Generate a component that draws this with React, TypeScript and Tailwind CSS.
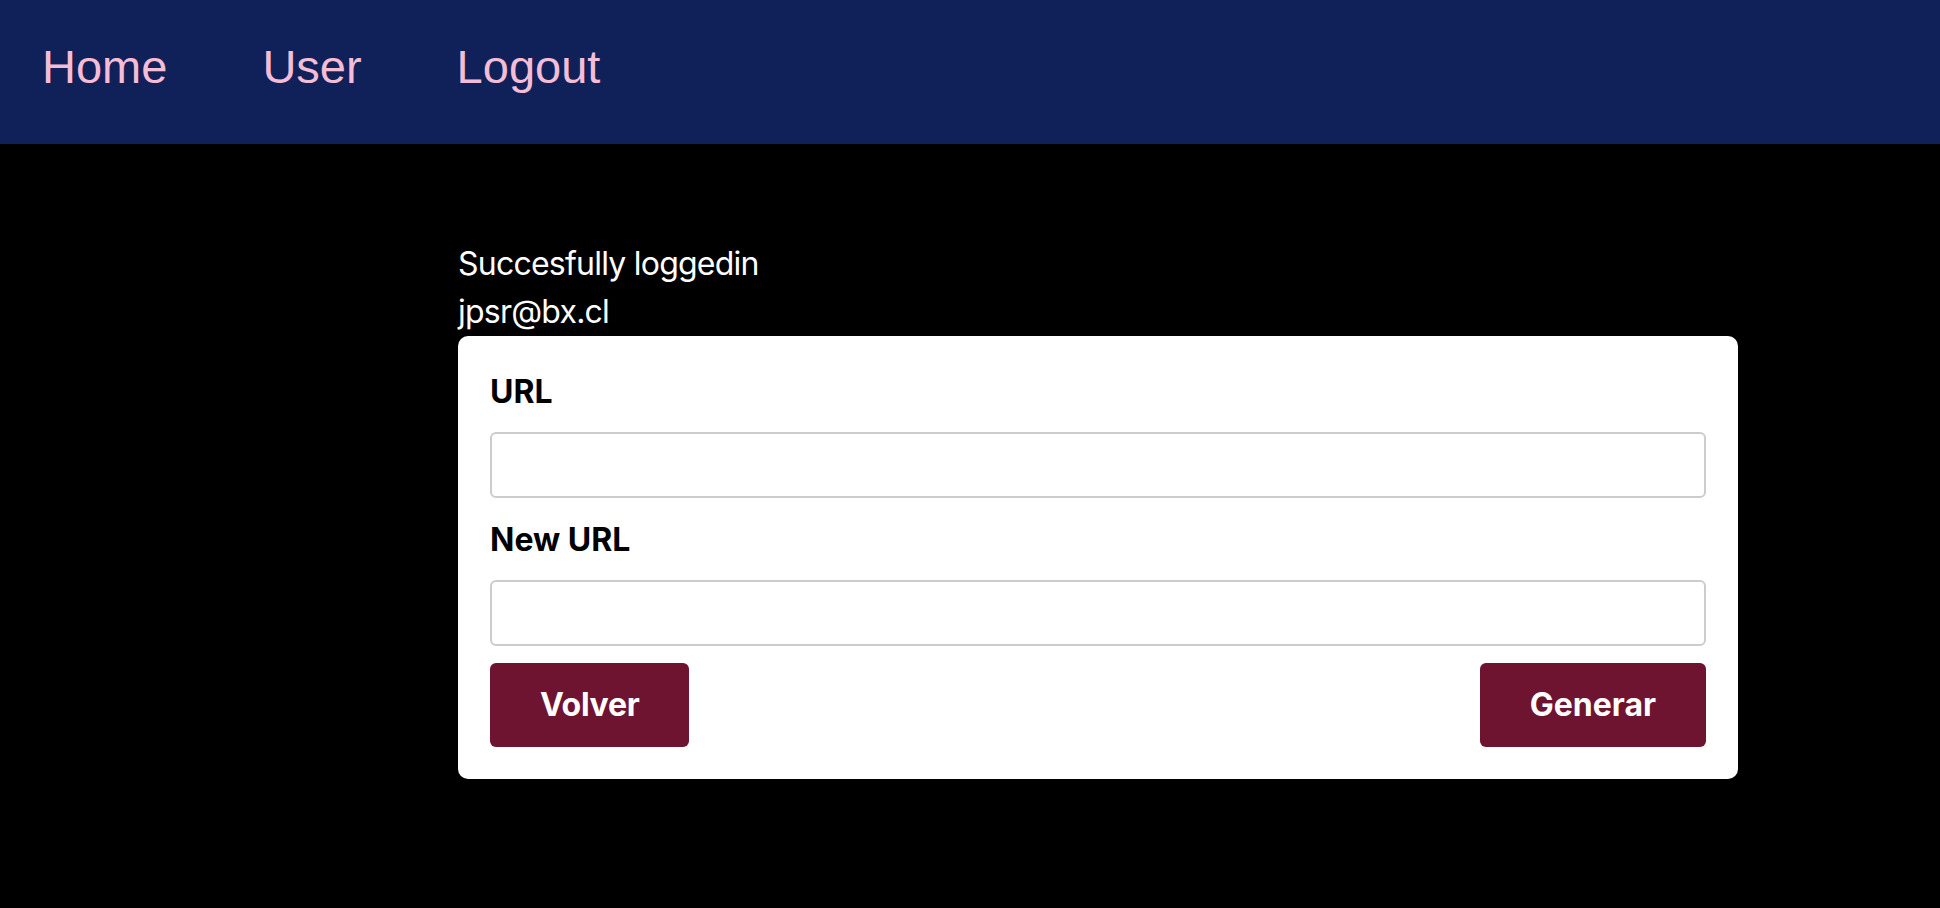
import { useState } from 'react'

const NAV_LINKS = ['Home', 'User', 'Logout']

export default function App() {
  const [url, setUrl] = useState('')
  const [newUrl, setNewUrl] = useState('')

  return (
    <div className="min-h-[908px] bg-black font-['Inter',sans-serif]">
      {/* ── Nav ── */}
      <nav className="h-[144px] bg-[#10215a] flex items-center pl-[42px] pb-3 gap-[95px]">
        {NAV_LINKS.map((l) => (
          <a key={l} href="#" className="font-['Liberation_Sans',Arial,sans-serif] text-[47px] text-[#f5bdd5] leading-none">
            {l}
          </a>
        ))}
      </nav>

      {/* ── Content ── */}
      <main className="pt-[96px] pl-[458px]">
        <div className="w-[1280px]">
          <p className="text-white text-[32px] leading-[48px] tracking-[-0.024em]">Succesfully loggedin</p>
          <p className="text-white text-[32px] leading-[48px] tracking-[-0.024em]">jpsr@bx.cl</p>

          <div className="bg-white rounded-[10px] p-8">
            <label className="block text-[32px] leading-[48px] font-bold text-black mb-4">URL</label>
            <input
              value={url}
              onChange={(e) => setUrl(e.target.value)}
              className="block w-full h-[66px] border-2 border-[#cccccc] rounded-md px-4 text-[28px] outline-none"
            />
            <label className="block text-[32px] leading-[48px] font-bold text-black mt-[18px] mb-4">New URL</label>
            <input
              value={newUrl}
              onChange={(e) => setNewUrl(e.target.value)}
              className="block w-full h-[66px] border-2 border-[#cccccc] rounded-md px-4 text-[28px] outline-none"
            />
            <div className="flex justify-between mt-[17px]">
              <button className="h-[84px] px-[50px] rounded-md bg-[#6e1430] text-white text-[32px] font-bold tracking-[-0.01em]">
                Volver
              </button>
              <button className="h-[84px] px-[50px] rounded-md bg-[#6e1430] text-white text-[32px] font-bold">
                Generar
              </button>
            </div>
          </div>
        </div>
      </main>
    </div>
  )
}
